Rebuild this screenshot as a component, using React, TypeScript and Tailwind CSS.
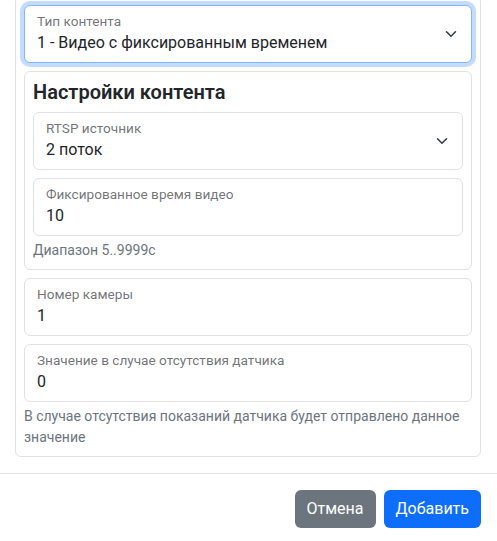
function Chevron() {
  return (
    <svg width="12" height="12" viewBox="0 0 16 16" fill="none" className="shrink-0 mr-[2px]">
      <path d="m2 5 6 6 6-6" stroke="#343a40" strokeWidth="2" strokeLinecap="round" strokeLinejoin="round" />
    </svg>
  );
}

function Field({ label, value, select, focus }: { label: string; value: string; select?: boolean; focus?: boolean }) {
  return (
    <div
      className={
        'flex items-center h-[58px] rounded-[6px] border bg-white pl-3 pr-3 ' +
        (focus ? 'border-[#86b7fe] shadow-[0_0_0_4px_rgba(13,110,253,0.25)]' : 'border-[#dee2e6]')
      }
    >
      <div className="flex-1 flex flex-col -mt-[3px]">
        <span className="text-[13.6px] leading-5 text-[#212529]/65">{label}</span>
        <span className="text-base leading-6 text-[#212529]">{value}</span>
      </div>
      {select && <Chevron />}
    </div>
  );
}

export default function App() {
  return (
    <div className="min-h-screen bg-white text-[#212529] overflow-hidden" style={{ fontFamily: 'Roboto, "Noto Sans", sans-serif' }}>
      <div className="pb-4 -mt-[4px] pl-[15px] pr-4">
        <div className="border border-[#dee2e6] rounded-[6px] p-2 flex flex-col gap-2">
          <Field label="Тип контента" value="1 - Видео с фиксированным временем" select focus />

          <div className="border border-[#dee2e6] rounded-[6px] p-2 flex flex-col">
            <h5 className="text-[20px] leading-6 font-semibold mb-2">Настройки контента</h5>
            <div className="flex flex-col gap-2">
              <Field label="RTSP источник" value="2 поток" select />
              <Field label="Фиксированное время видео" value="10" />
            </div>
            <p className="mt-1 text-sm leading-[21px] text-[#6c757d]">Диапазон 5..9999с</p>
          </div>

          <Field label="Номер камеры" value="1" />
          <div className="flex flex-col">
            <Field label="Значение в случае отсутствия датчика" value="0" />
            <p className="mt-1 text-sm leading-[21px] text-[#6c757d]">
              В случае отсутствия показаний датчика будет отправлено данное значение
            </p>
          </div>
        </div>
      </div>

      <div className="border-t border-[#dee2e6] flex justify-end items-center gap-2 px-4 pt-4 pb-4">
        <button className="h-[38px] px-3 rounded-[6px] bg-[#6c757d] text-white text-base">Отмена</button>
        <button className="h-[38px] px-3 rounded-[6px] bg-[#0d6efd] text-white text-base">Добавить</button>
      </div>
    </div>
  );
}
